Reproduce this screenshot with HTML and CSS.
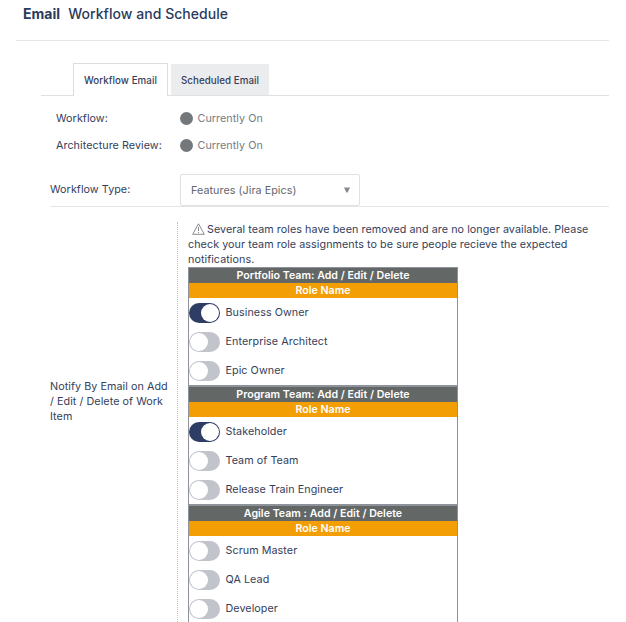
FILE: index.html
```
<!DOCTYPE html>
<html lang="en">
<head>
<meta charset="utf-8">
<title>Email Workflow and Schedule</title>
<link rel="stylesheet" href="styles.css">
</head>
<body>
<header class="title"><h1><b>Email</b>Workflow and Schedule</h1></header>
<nav class="tabs">
  <a class="tab active">Workflow Email</a>
  <a class="tab">Scheduled Email</a>
</nav>
<main>
  <div class="status"><span class="label">Workflow:</span><i class="dot"></i><span>Currently On</span></div>
  <div class="status"><span class="label">Architecture Review:</span><i class="dot"></i><span>Currently On</span></div>
  <div class="type">
    <span class="type-label">Workflow Type:</span>
    <div class="select"><span>Features (Jira Epics)</span><svg width="8" height="6" viewBox="0 0 8 6"><path d="M1 .5h6L4.600 5.500H3.400z" fill="#858990"/></svg></div>
  </div>
  <div class="notify">
    <div class="notify-label">Notify By Email on Add<br>/ Edit / Delete of Work<br>Item</div>
    <div class="notify-body">
      <p class="warning"><svg class="warn" width="13" height="12" viewBox="0 0 13 12" fill="none" stroke="#696d75" stroke-width=".8"><path d="M6.500.8 12.300 11.300H.700z" stroke-linejoin="round"/><path d="M6.500 4v4M6.500 9v1.100"/></svg>Several team roles have been removed and are no longer available. Please<br>check your team role assignments to be sure people recieve the expected<br>notifications.</p>
      <section class="team">
        <h2>Portfolio Team: Add / Edit / Delete</h2><h3>Role Name</h3>
        <div class="role"><i class="toggle on"></i>Business Owner</div>
        <div class="role"><i class="toggle"></i>Enterprise Architect</div>
        <div class="role"><i class="toggle"></i>Epic Owner</div>
      </section>
      <section class="team">
        <h2>Program Team: Add / Edit / Delete</h2><h3>Role Name</h3>
        <div class="role"><i class="toggle on"></i>Stakeholder</div>
        <div class="role"><i class="toggle"></i>Team of Team</div>
        <div class="role"><i class="toggle"></i>Release Train Engineer</div>
      </section>
      <section class="team">
        <h2>Agile Team : Add / Edit / Delete</h2><h3>Role Name</h3>
        <div class="role"><i class="toggle"></i>Scrum Master</div>
        <div class="role"><i class="toggle"></i>QA Lead</div>
        <div class="role"><i class="toggle"></i>Developer</div>
      </section>
    </div>
  </div>
</main>
</body>
</html>
```
FILE: styles.css
```
* { box-sizing: border-box; }
html { height: 622px; overflow: hidden; }
body {
  margin: 0;
  height: 622px;
  overflow: hidden;
  background: #fff;
  color: #35405a;
  font: 10.75px/15px Inter, "Liberation Sans", sans-serif;
  letter-spacing: .06px;
}
h1, h2, h3, p { margin: 0; }
.title {
  height: 41px;
  margin: 0 17px 0 16px;
  padding: 4px 0 0 7px;
  border-bottom: 1px solid #e4e6e8;
}
h1 {
  font-size: 14px;
  line-height: 20px;
  font-weight: 500;
  letter-spacing: .04px;
  color: #2c3a5c;
}
h1 b { font-weight: 700; margin-right: 8px; }
.tabs {
  display: flex;
  align-items: flex-end;
  gap: 3px;
  height: 55px;
  margin: 0 17px 0 41px;
  padding-left: 32px;
  border-bottom: 1px solid #dfe0e2;
}
.tab {
  width: 98px;
  height: 31px;
  background: #ebecee;
  text-align: center;
  font-size: 9.75px;
  letter-spacing: .06px;
  line-height: 33px;
  font-weight: 500;
}
.tab.active {
  width: 95px;
  height: 33px;
  margin-bottom: -1px;
  background: #fff;
  border: 1px solid #dcdde0;
  border-bottom: 0;
}
main { padding: 9px 17px 0 50px; }
.status {
  display: flex;
  align-items: center;
  height: 27px;
  padding-left: 6px;
  color: #777b83;
}
.label { width: 124px; color: #35405a; }
.dot {
  width: 13px;
  height: 13px;
  margin-right: 4.5px;
  border-radius: 50%;
  background: #75787b;
}
.type {
  display: flex;
  height: 48px;
  padding-top: 15px;
  border-bottom: 1px solid #e4e5e7;
}
.type-label { width: 130px; padding-top: 8px; }
.select {
  display: flex;
  align-items: center;
  justify-content: space-between;
  width: 180px;
  height: 32px;
  padding: 0 8px 0 10px;
  border: 1px solid #e0e1e3;
  border-radius: 2px;
  color: #62666e;
}
.notify { display: flex; padding-top: 15px; }
.notify-label { flex: 0 0 127px; padding-top: 157px; white-space: nowrap; }
.notify-body {
  flex: 1;
  height: 420px;
  padding-left: 10px;
  border-left: 1px dotted #bfc1c4;
}
.warning { white-space: nowrap; height: 45px; }
.warn { margin: 0 2px 0 4px; vertical-align: -2px; }
.team { width: 270px; border: 1px solid #8e929b; }
h2, h3 {
  height: 15px;
  color: #fff;
  text-align: center;
  font-size: 10.6px;
  line-height: 15px;
  font-weight: 600;
  letter-spacing: .03px;
}
h2 { background: #636766; }
h3 { background: #f39e05; }
.role { display: flex; align-items: center; gap: 5.5px; height: 29px; }
.toggle {
  width: 31px;
  height: 20px;
  margin-top: 1px;
  padding: .75px;
  border-radius: 10px;
  background: #c1c4cb;
}
.toggle::before {
  content: "";
  display: block;
  width: 18.5px;
  height: 18.5px;
  border-radius: 50%;
  background: #fff;
}
.toggle.on { background: #2d3d64; }
.toggle.on::before { margin-left: auto; }
```
